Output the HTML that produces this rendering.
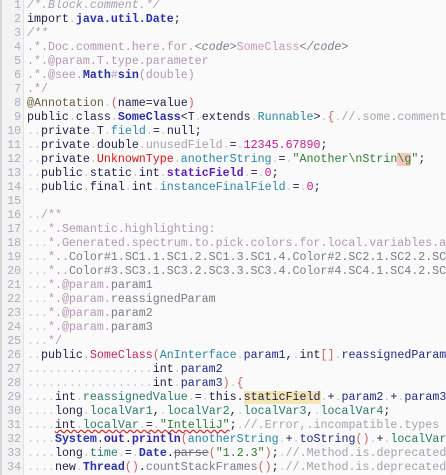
<!DOCTYPE html>
<html><head><meta charset="utf-8"><style>
html,body{margin:0;padding:0;width:446px;height:475px;overflow:hidden;background:#fafafa}
#wrap{position:absolute;left:0;top:0;width:446px;height:475px;overflow:hidden}
#g{position:absolute;left:0;top:0;width:24px;height:475px;background:#f3f3f3;border-right:1px solid #e2e2e2;border-left:2px solid #d6d6d6;box-sizing:border-box}
pre{margin:0;font-family:"Liberation Mono",monospace;font-size:11.65px;line-height:14px;white-space:pre}
#n{position:absolute;left:0;top:-1px;width:21px;text-align:right;color:#a8b0c0;font-size:11.5px}
#c{position:absolute;left:27px;top:-1px;color:#1f1f4a}
.w{color:#c4c4d0}
.bc{color:#a8a0ae;font-style:italic}
.dc{color:#b496b4}
.dt{color:#7a7a8a;font-style:italic}
.tg{color:#c898b8}
.b{font-weight:bold;color:#2a30b0}
.f{color:#2a86a8}
.sf{color:#5c1eb8;font-weight:bold}
.num{color:#c21c90}
.s{color:#2e7d32}
.r{color:#e01010}
.cl{color:#c8245a}
.p{color:#1e2a8a}
.br{color:#d06060}
.lv{color:#2a7a6a}
.cm{color:#a8a0ae}
.an{color:#6a5a3a}
.ye{background:#f5e6b6}
.pk{background:#f8c8c0}
.err{text-decoration:underline wavy #e02020;text-decoration-skip-ink:none}
</style></head><body>
<div id="wrap">
<div id="g"></div>
<pre id="n">1
2
3
4
5
6
7
8
9
10
11
12
13
14
15
16
17
18
19
20
21
22
23
24
25
26
27
28
29
30
31
32
33
34</pre>
<pre id="c"><span class="bc">/*.Block.comment.*/</span>
import<span class="w">.</span><span class="b">java.util.Date</span>;
<span class="bc">/**</span>
<span class="dc">.*.Doc.comment.here.for.</span><span class="dt">&lt;code&gt;</span><span class="tg">SomeClass</span><span class="dt">&lt;/code&gt;</span>
<span class="dc">.*.@param.T.type.parameter</span>
<span class="dc">.*.@see.</span><span class="b">Math</span><span class="dc">#</span><span class="b">sin</span><span class="dc">(double)</span>
<span class="dc">.*/</span>
<span class="an">@Annotation</span><span class="w">.</span><span class="br">(</span>name=value<span class="br">)</span>
public<span class="w">.</span>class<span class="w">.</span><span class="b">SomeClass</span>&lt;T<span class="w">.</span>extends<span class="w">.</span><span class="f">Runnable</span>&gt;<span class="w">.</span><span class="br">{</span><span class="w">.</span><span class="cm">//.some.comment</span>
<span class="w">..</span>private<span class="w">.</span>T<span class="w">.</span><span class="f">field</span><span class="w">.</span>=<span class="w">.</span>null;
<span class="w">..</span>private<span class="w">.</span>double<span class="w">.</span><span class="cm">unusedField</span><span class="w">.</span>=<span class="w">.</span><span class="num">12345.67890</span>;
<span class="w">..</span>private<span class="w">.</span><span class="r">UnknownType</span><span class="w">.</span><span class="f">anotherString</span><span class="w">.</span>=<span class="w">.</span><span class="s">"Another\nStrin<span class="pk">\g</span>"</span>;
<span class="w">..</span>public<span class="w">.</span>static<span class="w">.</span>int<span class="w">.</span><span class="sf">staticField</span><span class="w">.</span>=<span class="w">.</span><span class="num">0</span>;
<span class="w">..</span>public<span class="w">.</span>final<span class="w">.</span>int<span class="w">.</span><span class="f">instanceFinalField</span><span class="w">.</span>=<span class="w">.</span><span class="num">0</span>;

<span class="w">..</span><span class="dc">/**</span>
<span class="w">...</span><span class="dc">*.Semantic.highlighting:</span>
<span class="w">...</span><span class="dc">*.Generated.spectrum.to.pick.colors.for.local.variables.and.parameters:</span>
<span class="w">...</span><span class="dc">*..</span><span class="dt" style="font-style:normal">Color#1.SC1.1.SC1.2.SC1.3.SC1.4.Color#2.SC2.1.SC2.2.SC2.3</span>
<span class="w">...</span><span class="dc">*..</span><span class="dt" style="font-style:normal">Color#3.SC3.1.SC3.2.SC3.3.SC3.4.Color#4.SC4.1.SC4.2.SC4.3</span>
<span class="w">...</span><span class="dc">*.@param.</span><span class="dt" style="font-style:normal">param1</span>
<span class="w">...</span><span class="dc">*.@param.</span><span class="dt" style="font-style:normal">reassignedParam</span>
<span class="w">...</span><span class="dc">*.@param.</span><span class="dt" style="font-style:normal">param2</span>
<span class="w">...</span><span class="dc">*.@param.</span><span class="dt" style="font-style:normal">param3</span>
<span class="w">...</span><span class="dc">*/</span>
<span class="w">..</span>public<span class="w">.</span><span class="cl">SomeClass</span><span class="br">(</span><span class="f">AnInterface</span><span class="w">.</span><span class="p">param1</span>,<span class="w">.</span>int<span class="br">[]</span><span class="w">.</span><span class="p">reassignedParam</span>,
<span class="w">..................</span>int<span class="w">.</span><span class="p">param2</span>
<span class="w">..................</span>int<span class="w">.</span><span class="p">param3</span><span class="br">)</span><span class="w">.</span><span class="br">{</span>
<span class="w">....</span>int<span class="w">.</span><span class="lv">reassignedValue</span><span class="w">.</span>=<span class="w">.</span>this.<span class="ye">staticField</span><span class="w">.</span>+<span class="w">.</span><span class="p">param2</span><span class="w">.</span>+<span class="w">.</span><span class="p">param3</span>;
<span class="w">....</span>long<span class="w">.</span><span class="lv">localVar1</span>,<span class="w">.</span><span class="lv">localVar2</span>,<span class="w">.</span><span class="lv">localVar3</span>,<span class="w">.</span><span class="lv">localVar4</span>;
<span class="w">....</span><span class="err">int<span class="w">.</span><span class="lv">localVar</span><span class="w">.</span>=<span class="w">.</span><span class="s">"IntelliJ"</span></span>;<span class="w">.</span><span class="cm">//.Error,.incompatible.types</span>
<span class="w">....</span><span class="b">System</span>.<span class="sf" style="color:#3a1a9a">out</span>.<span class="b" style="color:#3a2aa8">println</span><span class="br">(</span><span class="f">anotherString</span><span class="w">.</span>+<span class="w">.</span><span class="p">toString</span><span class="br">()</span><span class="w">.</span>+<span class="w">.</span><span class="lv">localVar</span>);
<span class="w">....</span>long<span class="w">.</span><span class="lv">time</span><span class="w">.</span>=<span class="w">.</span><span class="b">Date</span>.<span class="cm" style="text-decoration:line-through;color:#6a6a7a">parse</span><span class="br">(</span><span class="s">"1.2.3"</span><span class="br">)</span>;<span class="w">.</span><span class="cm">//.Method.is.deprecated</span>
<span class="w">....</span>new<span class="w">.</span><span class="b">Thread</span><span class="br">()</span>.<span class="cm" style="color:#7a7a90">countStackFrames</span><span class="br">()</span>;<span class="w">.</span><span class="cm">//.Method.is.deprecated</span></pre>
</div>
</body></html>
